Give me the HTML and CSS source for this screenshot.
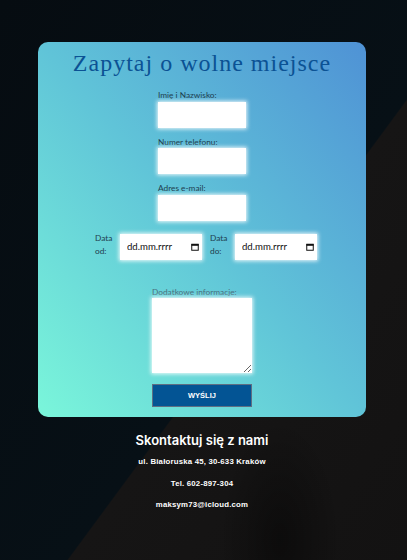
FILE: index.html
```html
<!DOCTYPE html>
<html lang="pl">
<head>
<meta charset="utf-8">
<link rel="stylesheet" href="styles.css">
</head>
<body>
<main class="page">
  <section class="card">
    <h1 class="title">Zapytaj o wolne miejsce</h1>
    <form class="form">
      <div class="field">
        <label class="label">Imię i Nazwisko:</label>
        <input class="input" type="text">
      </div>
      <div class="field">
        <label class="label">Numer telefonu:</label>
        <input class="input" type="text">
      </div>
      <div class="field">
        <label class="label">Adres e-mail:</label>
        <input class="input" type="text">
      </div>
      <div class="dates">
        <div class="date-group">
          <span class="date-label">Data od:</span>
          <div class="date-box">
            <input class="date-input" type="text" placeholder="dd.mm.rrrr">
            <svg class="cal" viewBox="0 0 8 8" width="8" height="8"><rect x="0.75" y="1.25" width="6.5" height="6" fill="none" stroke="#111" stroke-width="1"/><rect x="0.5" y="1" width="7" height="1.8" fill="#111"/></svg>
          </div>
        </div>
        <div class="date-group">
          <span class="date-label">Data do:</span>
          <div class="date-box">
            <input class="date-input" type="text" placeholder="dd.mm.rrrr">
            <svg class="cal" viewBox="0 0 8 8" width="8" height="8"><rect x="0.75" y="1.25" width="6.5" height="6" fill="none" stroke="#111" stroke-width="1"/><rect x="0.5" y="1" width="7" height="1.8" fill="#111"/></svg>
          </div>
        </div>
      </div>
      <div class="field extra">
        <label class="label muted">Dodatkowe informacje:</label>
        <textarea class="textarea"></textarea>
      </div>
      <button class="submit" type="button">WYŚLIJ</button>
    </form>
  </section>
  <footer class="contact">
    <h2 class="contact-title">Skontaktuj się z nami</h2>
    <p class="contact-line">ul. Białoruska 45, 30-633 Kraków</p>
    <p class="contact-line">Tel. 602-897-304</p>
    <p class="contact-line">maksym73@icloud.com</p>
  </footer>
</main>
</body>
</html>
```

FILE: styles.css
```css
html, body {
  margin: 0;
  height: 100%;
}
body {
  background:
    radial-gradient(ellipse 60px 120px at 280px 540px, rgba(0,0,0,0.4), rgba(0,0,0,0) 100%),
    linear-gradient(126.4deg, #060c11 0%, #071016 58.5%, #161515 58.7%, #131212 100%);
  font-family: Lato, "Open Sans", sans-serif;
  overflow: hidden;
}
.page {
  padding-top: 42px;
  padding-right: 3px;
  display: flex;
  flex-direction: column;
  align-items: center;
}
.card {
  width: 328px;
  box-sizing: border-box;
  border-radius: 10px;
  background: linear-gradient(to top right, #7af6da 0%, #60c4d8 50%, #4f92d5 100%);
  padding: 7px 0 10px;
  display: flex;
  flex-direction: column;
  align-items: center;
}
.title {
  margin: 0;
  font-family: "Liberation Serif", "Times New Roman", serif;
  font-weight: normal;
  font-size: 24px;
  letter-spacing: 1px;
  color: #0b5294;
  line-height: 28px;
}
.form {
  margin-top: 13px;
  display: flex;
  flex-direction: column;
  align-items: center;
}
.field {
  display: flex;
  flex-direction: column;
  margin-bottom: 9px;
}
.label {
  font-size: 8.3px;
  line-height: 10px;
  color: #1e3d4e;
  margin-bottom: 1.5px;
}
.muted {
  color: #4a6f7c;
}
.input {
  width: 88px;
  height: 26px;
  box-sizing: border-box;
  border: none;
  background: #fff;
  box-shadow: 0 0 4px 1px rgba(255,255,255,0.9);
  margin: 0;
}
.dates {
  display: flex;
  gap: 8px;
  margin-top: 4px;
  margin-left: 8px;
}
.date-group {
  display: flex;
  align-items: flex-start;
  gap: 5px;
}
.date-label {
  width: 20px;
  font-size: 8.3px;
  line-height: 13px;
  color: #1e3d4e;
  margin-top: -2px;
}
.date-box {
  width: 82px;
  height: 26px;
  box-sizing: border-box;
  background: #fff;
  box-shadow: 0 0 4px 1px rgba(255,255,255,0.9);
  display: flex;
  align-items: center;
  padding: 0 3px 0 7px;
}
.date-input {
  width: 62px;
  border: none;
  padding: 0;
  margin: 0;
  font-family: Lato, sans-serif;
  font-size: 9.6px;
  outline: none;
  background: transparent;
}
.date-input::placeholder {
  color: #111;
}
.cal {
  margin-left: auto;
}
.extra {
  margin-top: 27px;
  margin-bottom: 0;
}
.textarea {
  width: 100px;
  height: 75px;
  box-sizing: border-box;
  border: none;
  background: #fff;
  box-shadow: 0 0 4px 1px rgba(255,255,255,0.9);
  margin: 0;
  display: block;
}
.submit {
  margin-top: 11px;
  width: 100px;
  height: 23px;
  box-sizing: border-box;
  background: #035494;
  border: 1px solid #5f6e82;
  color: #fff;
  font-family: "Liberation Sans", Arial, sans-serif;
  font-weight: bold;
  font-size: 7.5px;
  padding: 0;
}
.contact {
  margin-top: 15px;
  text-align: center;
  color: #fff;
}
.contact-title {
  margin: 0 0 8px;
  font-family: Inter, "Liberation Sans", sans-serif;
  font-weight: 600;
  font-size: 13px;
  line-height: 17px;
}
.contact-line {
  margin: 0 0 11.5px;
  font-family: "Liberation Sans", Arial, sans-serif;
  font-weight: bold;
  font-size: 7.8px;
  line-height: 10px;
  letter-spacing: 0.2px;
}
```
